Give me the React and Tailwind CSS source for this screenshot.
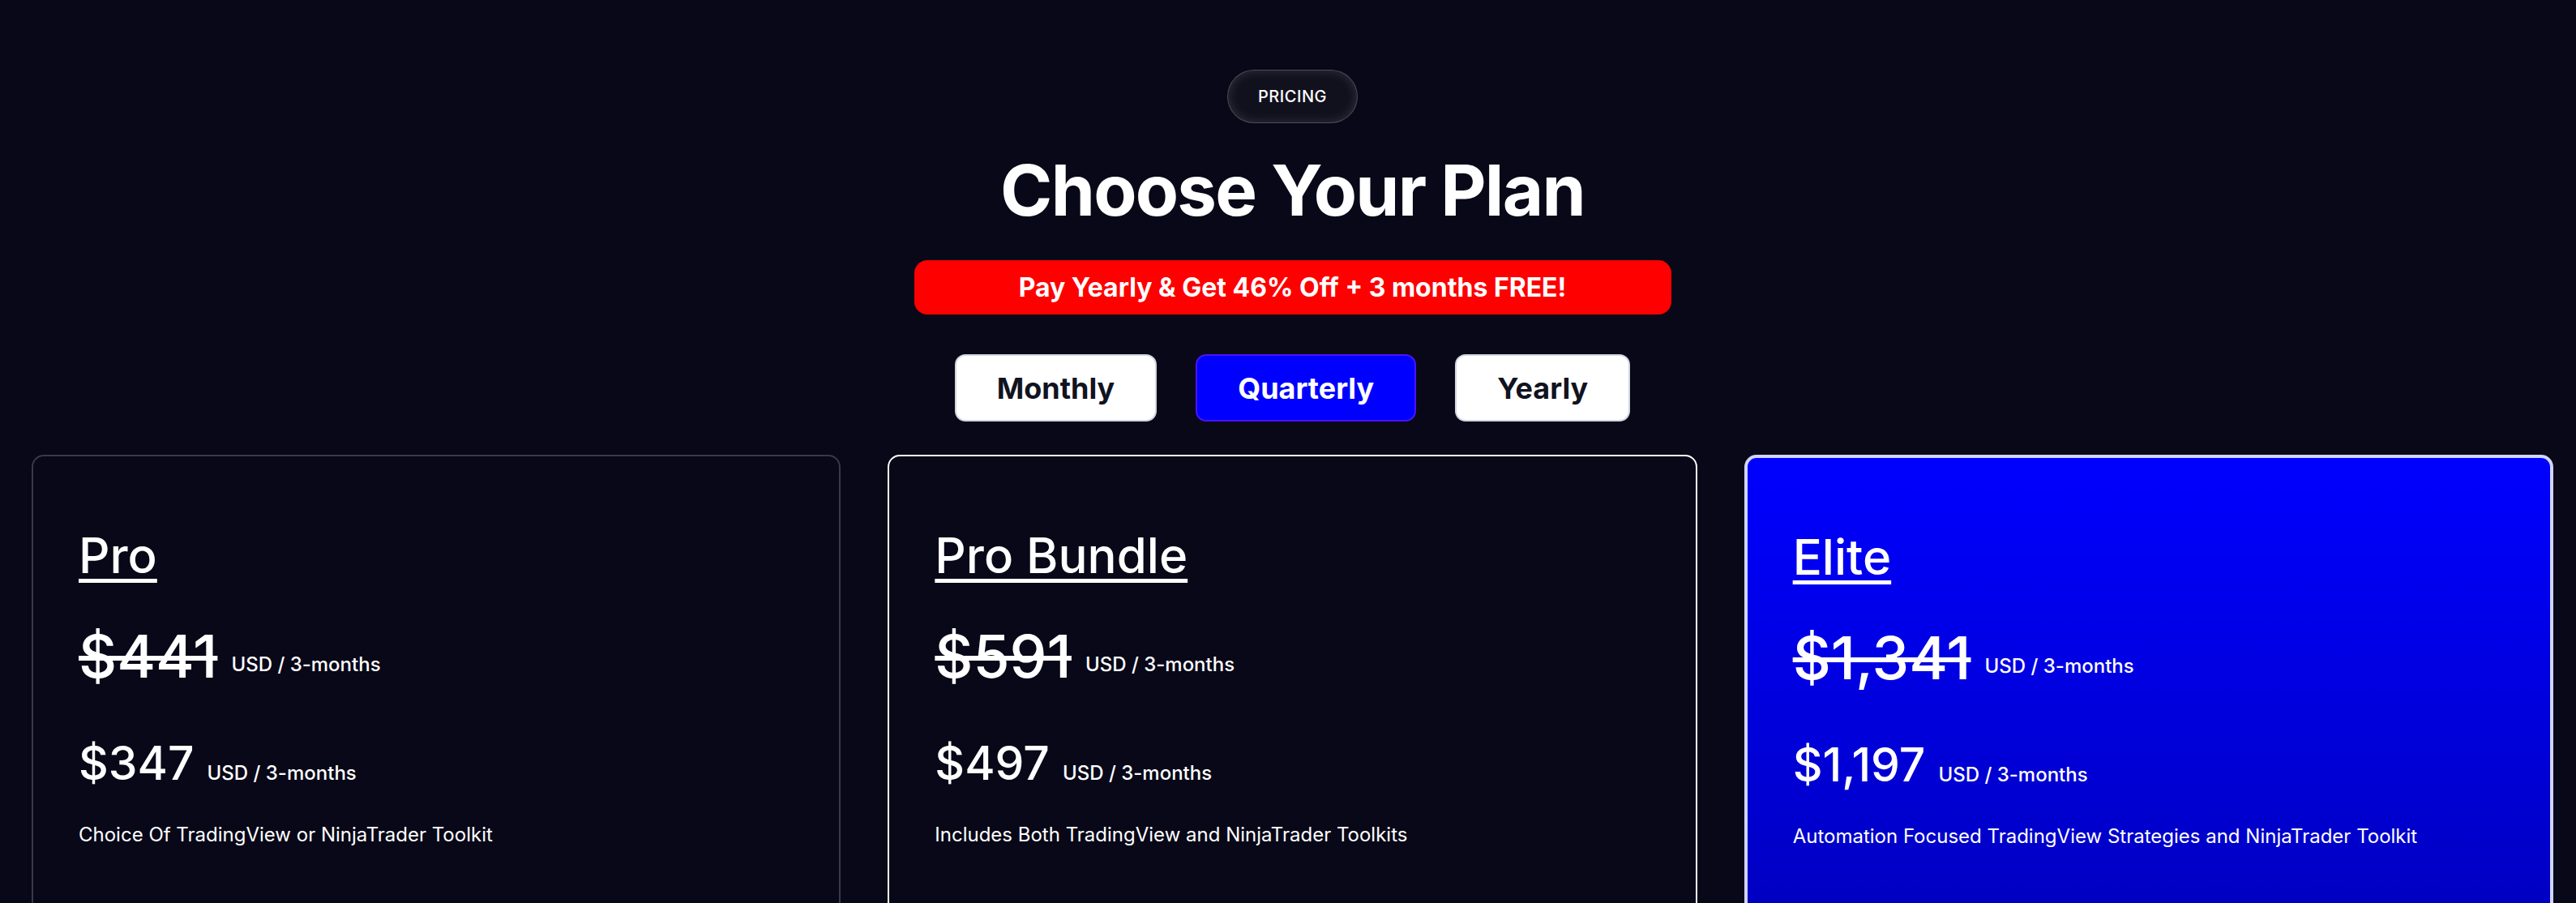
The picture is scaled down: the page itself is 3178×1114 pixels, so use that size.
import React, { useState } from 'react';

const plans = [
    {
        name: 'Pro',
        was: '$441',
        price: '$347',
        blurb: 'Choice Of TradingView or NinjaTrader Toolkit',
        tone: 'plain',
    },
    {
        name: 'Pro Bundle',
        was: '$591',
        price: '$497',
        blurb: 'Includes Both TradingView and NinjaTrader Toolkits',
        tone: 'outlined',
    },
    {
        name: 'Elite',
        was: '$1,341',
        price: '$1,197',
        blurb: 'Automation Focused TradingView Strategies and NinjaTrader Toolkit',
        tone: 'featured',
    },
];

const cardStyles = {
    plain: 'border-2 border-[#363b48] bg-[#080818]',
    outlined: 'border-2 border-white bg-[#080818]',
    featured: 'border-4 border-[#d2d4fa] bg-gradient-to-b from-[#0000ff] to-[#0000ac]',
};

const PlanCard = ({ plan }) => (
    <div className={`rounded-[15px] min-h-[780px] px-14 pt-[92px] text-white ${cardStyles[plan.tone]}`}>
        <h3 className="text-[60px] leading-none font-medium underline decoration-[5px] underline-offset-[7px]">
            {plan.name}
        </h3>

        {/* old price */}
        <div className="flex items-end mt-[58px]">
            <span className="text-[73px] leading-none font-medium line-through decoration-[6px]">{plan.was}</span>
            <span className="ml-[17px] mb-[14px] text-2xl leading-none font-medium">USD / 3-months</span>
        </div>

        {/* current price */}
        <div className="flex items-baseline mt-[67px]">
            <span className="text-[57px] leading-none font-medium">{plan.price}</span>
            <span className="ml-4 text-2xl leading-none font-medium">USD / 3-months</span>
        </div>

        <p className="mt-[48px] text-2xl leading-none">{plan.blurb}</p>
    </div>
);

const App = () => {
    const [period, setPeriod] = useState('Quarterly');

    return (
        <div className="min-h-screen bg-[#080818] font-['Inter','Liberation_Sans',sans-serif] pl-[39px] pr-[28px] pt-[86px] pb-20">
            <div className="flex flex-col items-center">
                <span className="h-[66px] px-[37px] flex items-center rounded-full border border-white/25 bg-[#11111e] shadow-[inset_0_0_14px_rgba(255,255,255,0.14)] text-white text-[20px] font-medium tracking-wide">
                    PRICING
                </span>

                <h1 className="mt-[39px] text-[87px] leading-none font-bold tracking-[-0.02em] text-white">
                    Choose Your Plan
                </h1>

                <div className="mt-[43px] w-[934px] h-[67px] rounded-2xl bg-[#ff0000] flex items-center justify-center text-white text-[32px] font-bold">
                    Pay Yearly &amp; Get 46% Off + 3 months FREE!
                </div>

                <div className="mt-[49px] flex gap-12">
                    {['Monthly', 'Quarterly', 'Yearly'].map((p) => (
                        <button
                            key={p}
                            onClick={() => setPeriod(p)}
                            className={
                                period === p
                                    ? 'h-[83px] px-[50px] rounded-[13px] border-2 border-[#4b12ff] bg-[#0000ff] text-white text-[36px] font-bold'
                                    : 'h-[83px] px-[50px] rounded-[13px] border-2 border-[#d3d5e2] bg-white text-[#11131f] text-[36px] font-bold'
                            }
                        >
                            {p}
                        </button>
                    ))}
                </div>
            </div>

            <div className="mt-[41px] grid grid-cols-3 gap-[58px]">
                {plans.map((plan) => (
                    <PlanCard key={plan.name} plan={plan} />
                ))}
            </div>
        </div>
    );
};

export default App;
